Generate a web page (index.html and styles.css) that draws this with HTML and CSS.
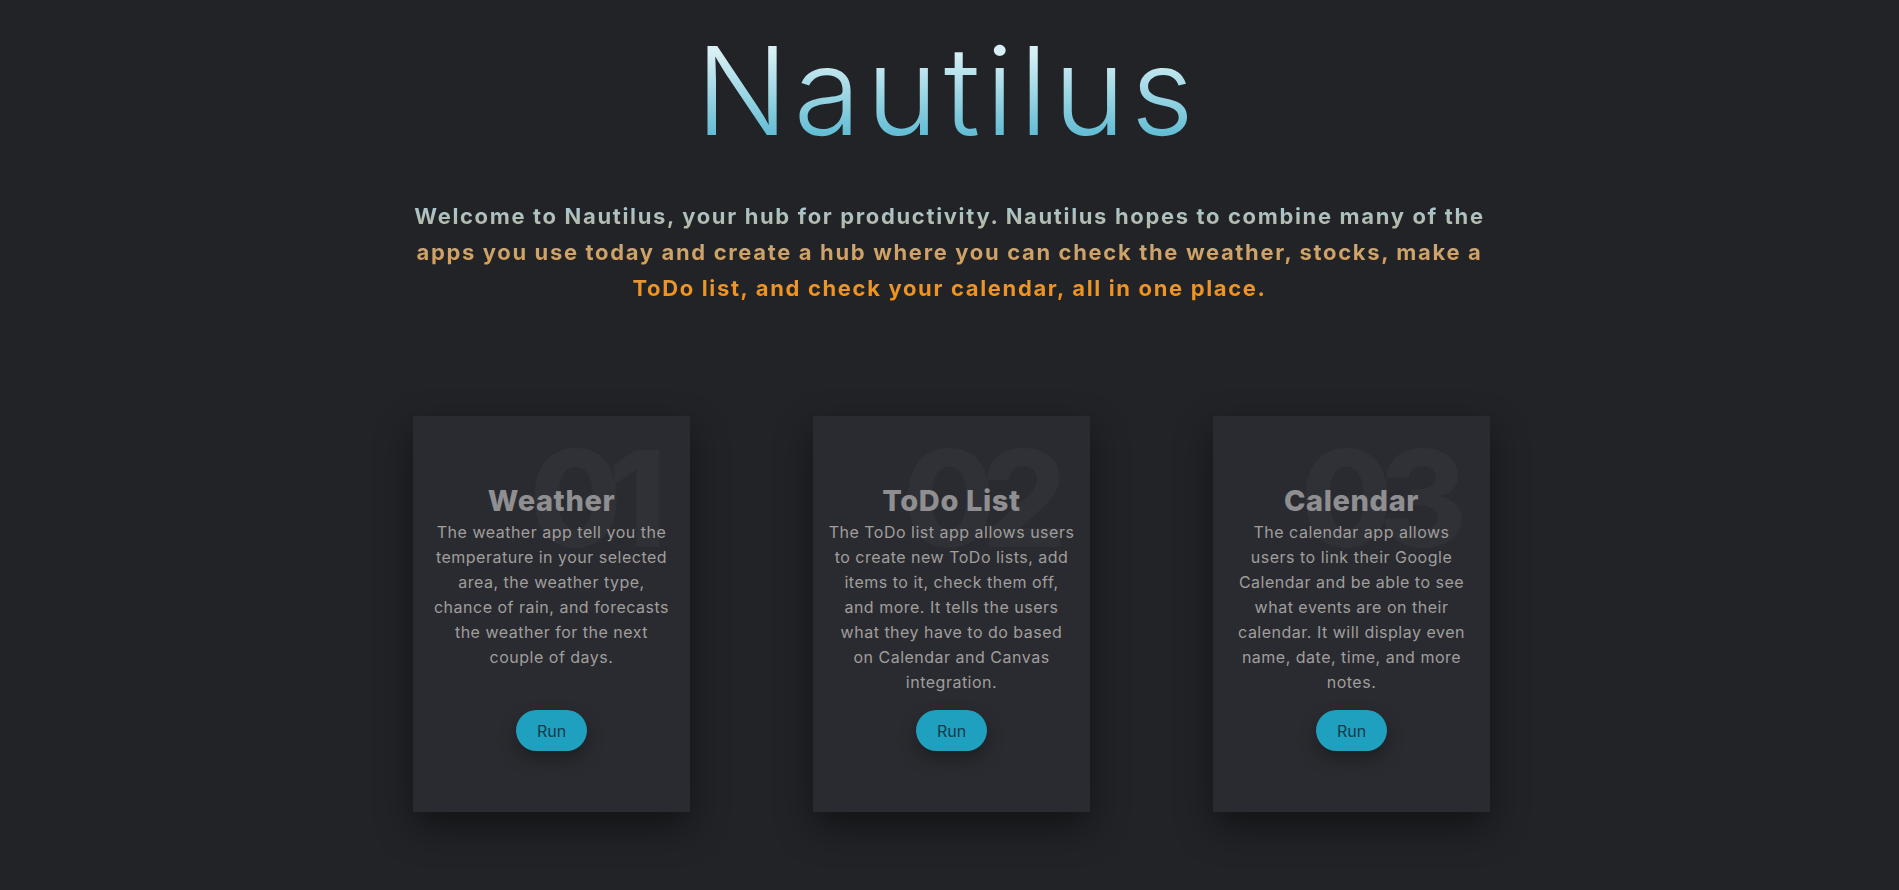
FILE: index.html
```html
<!DOCTYPE html>
<html lang="en">
<head>
<meta charset="utf-8">
<title>Nautilus</title>
<link rel="stylesheet" href="styles.css">
</head>
<body>
<header class="hero">
  <h1 class="brand">Nautilus</h1>
  <p class="intro">Welcome to Nautilus, your hub for productivity. Nautilus hopes to combine many of the<br>apps you use today and create a hub where you can check the weather, stocks, make a<br>ToDo list, and check your calendar, all in one place.</p>
</header>
<main class="cards">
  <article class="card">
    <span class="card-num">01</span>
    <div class="card-body">
      <h2 class="card-title">Weather</h2>
      <p class="card-text">The weather app tell you the<br>temperature in your selected<br>area, the weather type,<br>chance of rain, and forecasts<br>the weather for the next<br>couple of days.</p>
    </div>
    <button class="run-btn">Run</button>
  </article>
  <article class="card">
    <span class="card-num">02</span>
    <div class="card-body">
      <h2 class="card-title">ToDo List</h2>
      <p class="card-text">The ToDo list app allows users<br>to create new ToDo lists, add<br>items to it, check them off,<br>and more. It tells the users<br>what they have to do based<br>on Calendar and Canvas<br>integration.</p>
    </div>
    <button class="run-btn">Run</button>
  </article>
  <article class="card">
    <span class="card-num">03</span>
    <div class="card-body">
      <h2 class="card-title">Calendar</h2>
      <p class="card-text">The calendar app allows<br>users to link their Google<br>Calendar and be able to see<br>what events are on their<br>calendar. It will display even<br>name, date, time, and more<br>notes.</p>
    </div>
    <button class="run-btn">Run</button>
  </article>
</main>
</body>
</html>
```

FILE: styles.css
```css
html, body {
  margin: 0;
  padding: 0;
}
body {
  background: #222327;
  font-family: "Inter", "DejaVu Sans", sans-serif;
  min-height: 890px;
}
.hero {
  display: flex;
  flex-direction: column;
  align-items: center;
  padding-top: 21px;
}
.brand {
  margin: 0 0 0 -4px;
  font-size: 122px;
  font-weight: 300;
  line-height: 140px;
  letter-spacing: 5.5px;
  background: linear-gradient(180deg, #d8f0f5 22%, #55b7d0 88%);
  -webkit-background-clip: text;
  background-clip: text;
  color: transparent;
}
.intro {
  margin: 37px 0 0;
  text-align: center;
  white-space: nowrap;
  font-size: 22px;
  font-weight: 700;
  line-height: 36px;
  letter-spacing: 1.65px;
  background: linear-gradient(180deg, #a3cbd9 5%, #cda36b 50%, #f7900f 95%);
  -webkit-background-clip: text;
  background-clip: text;
  color: transparent;
}
.cards {
  display: flex;
  justify-content: center;
  gap: 123px;
  margin-top: 110px;
  padding-left: 4px;
}
.card {
  position: relative;
  width: 277px;
  height: 396px;
  box-sizing: border-box;
  background: #2a2b30;
  box-shadow: 0 15px 35px rgba(0, 0, 0, 0.45);
  display: flex;
  flex-direction: column;
  align-items: center;
  padding: 66px 8px 61px;
  overflow: hidden;
}
.card-num {
  position: absolute;
  top: 15px;
  right: 37px;
  font-size: 134px;
  font-weight: 800;
  line-height: 1;
  color: #303136;
  letter-spacing: -14px;
}
.card-body {
  position: relative;
  text-align: center;
}
.card-title {
  margin: 0;
  font-size: 29px;
  font-weight: 800;
  line-height: 38px;
  letter-spacing: 0.6px;
  color: #8f8f91;
}
.card-text {
  margin: 0;
  white-space: nowrap;
  font-size: 16px;
  line-height: 25px;
  letter-spacing: 0.5px;
  color: #a09e9c;
}
.run-btn {
  margin-top: auto;
  width: 71px;
  height: 41px;
  border: none;
  border-radius: 21px;
  background: #1fa0be;
  color: #143a4c;
  font-family: "Inter", "DejaVu Sans", sans-serif;
  font-size: 16px;
  box-shadow: 0 8px 18px rgba(0, 0, 0, 0.3);
  position: relative;
}
```
